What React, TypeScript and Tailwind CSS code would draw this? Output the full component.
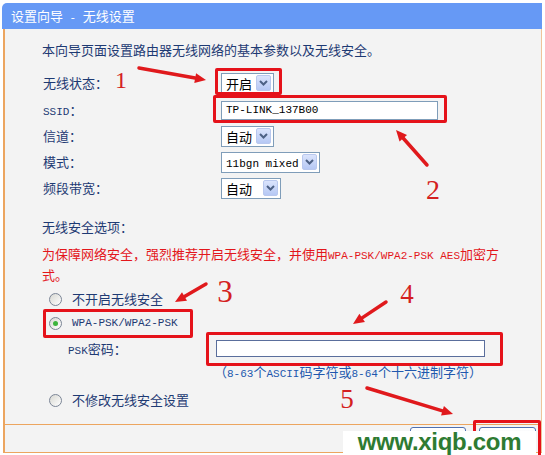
import React from 'react';

// ASCII runs are set in a half-width mono face, like the router's SimSun page
function Lat({ children }: { children: React.ReactNode }) {
  return <span className="font-['Liberation_Mono',monospace] text-[11px] leading-none">{children}</span>;
}

function DropArrow() {
  return (
    <span className="flex h-[16px] w-[15px] items-center justify-center rounded-[2px] border border-[#b9c8ee] bg-linear-to-b from-[#dbe4fc] to-[#b6c8f4]">
      <svg width="9" height="6" viewBox="0 0 9 6">
        <path d="M1 1 L4.5 4.5 L8 1" fill="none" stroke="#4d6185" strokeWidth="2" />
      </svg>
    </span>
  );
}

function Select({ value, w }: { value: React.ReactNode; w: string }) {
  return (
    <div className={`flex h-[21px] items-center justify-between border border-[#7f9db9] bg-white pl-[4px] pr-[2px] text-black ${w}`}>
      <span className="leading-none">{value}</span>
      <DropArrow />
    </div>
  );
}

function Radio({ checked }: { checked?: boolean }) {
  return (
    <span className="flex h-[13px] w-[13px] shrink-0 items-center justify-center rounded-full border border-[#7b8596] bg-linear-to-br from-[#d8d8d2] to-white">
      {checked && <span className="h-[5px] w-[5px] rounded-full bg-[#3cb43c]" />}
    </span>
  );
}

function Arrow({ x1, y1, x2, y2 }: { x1: number; y1: number; x2: number; y2: number }) {
  const a = Math.atan2(y2 - y1, x2 - x1);
  const len = 11;
  const half = 5;
  const bx = x2 - len * Math.cos(a);
  const by = y2 - len * Math.sin(a);
  const p1 = `${bx + half * Math.sin(a)},${by - half * Math.cos(a)}`;
  const p2 = `${bx - half * Math.sin(a)},${by + half * Math.cos(a)}`;
  return (
    <g>
      <line x1={x1} y1={y1} x2={bx} y2={by} stroke="#e0191c" strokeWidth="3.5" strokeLinecap="round" />
      <polygon points={`${x2},${y2} ${p1} ${p2}`} fill="#e0191c" />
    </g>
  );
}

const rows: { label: React.ReactNode; control: React.ReactNode; h: string }[] = [
  { label: '无线状态：', control: <Select value="开启" w="w-[53px]" />, h: 'h-[28px]' },
  {
    label: <><Lat>SSID</Lat>：</>,
    control: (
      <div className="flex h-[19px] w-[217px] items-center border border-[#7f9db9] bg-white pl-[4px] text-black">
        <Lat>TP-LINK_137B00</Lat>
      </div>
    ),
    h: 'h-[26px]',
  },
  { label: '信道：', control: <Select value="自动" w="w-[53px]" />, h: 'h-[26px]' },
  { label: '模式：', control: <Select value={<Lat>11bgn mixed</Lat>} w="w-[99px]" />, h: 'h-[26px]' },
  { label: '频段带宽：', control: <Select value="自动" w="w-[60px]" />, h: 'h-[26px]' },
];

export default function App() {
  return (
    <div className="relative h-[455px] w-[545px] overflow-hidden bg-white pt-[3px] text-[13px] font-['Noto_Sans_CJK_SC',sans-serif]">
      <div className="ml-[2px] w-[540px]">
        {/* title bar */}
        <div className="h-[26px] rounded-tl-[5px] bg-[#6699f5] pl-[9px] leading-[26px] text-white">
          设置向导<Lat>&nbsp;-&nbsp;</Lat>无线设置
        </div>

        {/* body */}
        <div className="ml-[1px] border-b border-l-2 border-r border-b-[#eca55f] border-l-[#eca55f] border-r-[#efc39a] bg-[#f3f3f3] text-[#1e3a73]">
          <div className="h-[395px] pl-[37px] pt-[11px]">
            <div className="h-[20px] leading-[20px]">本向导页面设置路由器无线网络的基本参数以及无线安全。</div>

            <div className="mt-[9px]">
              {rows.map((r, i) => (
                <div key={i} className={`grid grid-cols-[179px_1fr] items-center ${r.h}`}>
                  <div className="pl-[1px]">{r.label}</div>
                  <div>{r.control}</div>
                </div>
              ))}
            </div>

            <div className="mt-[16px] h-[20px] leading-[20px]">无线安全选项：</div>
            <div className="mt-[6px] w-[466px] leading-[21px] text-[#e3161b]">
              为保障网络安全，强烈推荐开启无线安全，并使用<Lat>WPA-PSK/WPA2-PSK AES</Lat>加密方式。
            </div>

            <div className="mt-[2px] flex h-[24px] items-center gap-[10px] pl-[7px]">
              <Radio />
              <span>不开启无线安全</span>
            </div>
            <div className="flex h-[24px] items-center gap-[10px] pl-[7px]">
              <Radio checked />
              <Lat>WPA-PSK/WPA2-PSK</Lat>
            </div>
            <div className="mt-[3px] grid h-[21px] grid-cols-[174px_1fr] items-center">
              <div className="pl-[26px]">
                <Lat>PSK</Lat>密码：
              </div>
              <div className="h-[17px] w-[269px] border border-[#5a6e9c] bg-white" />
            </div>
            <div className="mt-[3px] h-[20px] pl-[172px] leading-[20px] text-[#2158ae]">
              （<Lat>8-63</Lat>个<Lat>ASCII</Lat>码字符或<Lat>8-64</Lat>个十六进制字符）
            </div>
            <div className="mt-[8px] flex h-[20px] items-center gap-[10px] pl-[7px]">
              <Radio />
              <span>不修改无线安全设置</span>
            </div>
          </div>

          {/* footer */}
          <div className="flex h-[28px] items-start justify-end gap-[13px] border-t border-[#eca55f] pr-[5px] pt-[2px]">
            <button className="h-[22px] w-[56px] rounded-[3px] border border-[#4f6fb0] bg-linear-to-b from-white to-[#e3e6ee] text-[13px] text-black">
              上一步
            </button>
            <button className="h-[22px] w-[57px] rounded-[3px] border border-[#4f6fb0] bg-linear-to-b from-white to-[#e3e6ee] text-[13px] text-black">
              下一步
            </button>
          </div>
        </div>
      </div>

      {/* red annotation boxes */}
      <div className="absolute left-[215px] top-[68px] h-[27px] w-[67px] rounded-[2px] border-[3px] border-[#e5121a]" />
      <div className="absolute left-[213px] top-[95px] h-[28px] w-[234px] rounded-[2px] border-[3px] border-[#e5121a]" />
      <div className="absolute left-[43px] top-[309px] h-[29px] w-[150px] rounded-[2px] border-[3px] border-[#e5121a]" />
      <div className="absolute left-[206px] top-[332px] h-[34px] w-[297px] rounded-[2px] border-[3px] border-[#e5121a]" />
      <div className="absolute left-[473px] top-[420px] h-[40px] w-[68px] rounded-[2px] border-[3px] border-[#e5121a]" />

      <svg className="pointer-events-none absolute left-0 top-0" width="545" height="455">
        <Arrow x1={139} y1={68} x2={206} y2={80} />
        <Arrow x1={427} y1={165} x2={396} y2={130} />
        <Arrow x1={206} y1={284} x2={175} y2={302} />
        <Arrow x1={386} y1={302} x2={353} y2={324} />
        <Arrow x1={367} y1={388} x2={453} y2={414} />
        <g fill="#d42020" fontFamily="'Liberation Serif', serif" textAnchor="middle">
          <text x="121" y="88" fontSize="24">1</text>
          <text x="433" y="199" fontSize="28">2</text>
          <text x="225" y="302" fontSize="31">3</text>
          <text x="407" y="303" fontSize="27">4</text>
          <text x="347" y="408" fontSize="27">5</text>
        </g>
      </svg>

      {/* site watermark */}
      <div className="absolute left-[343px] top-[431px] flex h-[24px] w-[193px] items-start justify-center bg-white">
        <span className="font-['Liberation_Sans',sans-serif] text-[24px] font-bold leading-[22px] tracking-[-0.3px] text-[#2e7b32]">
          www.xiqb.com
        </span>
      </div>
    </div>
  );
}
